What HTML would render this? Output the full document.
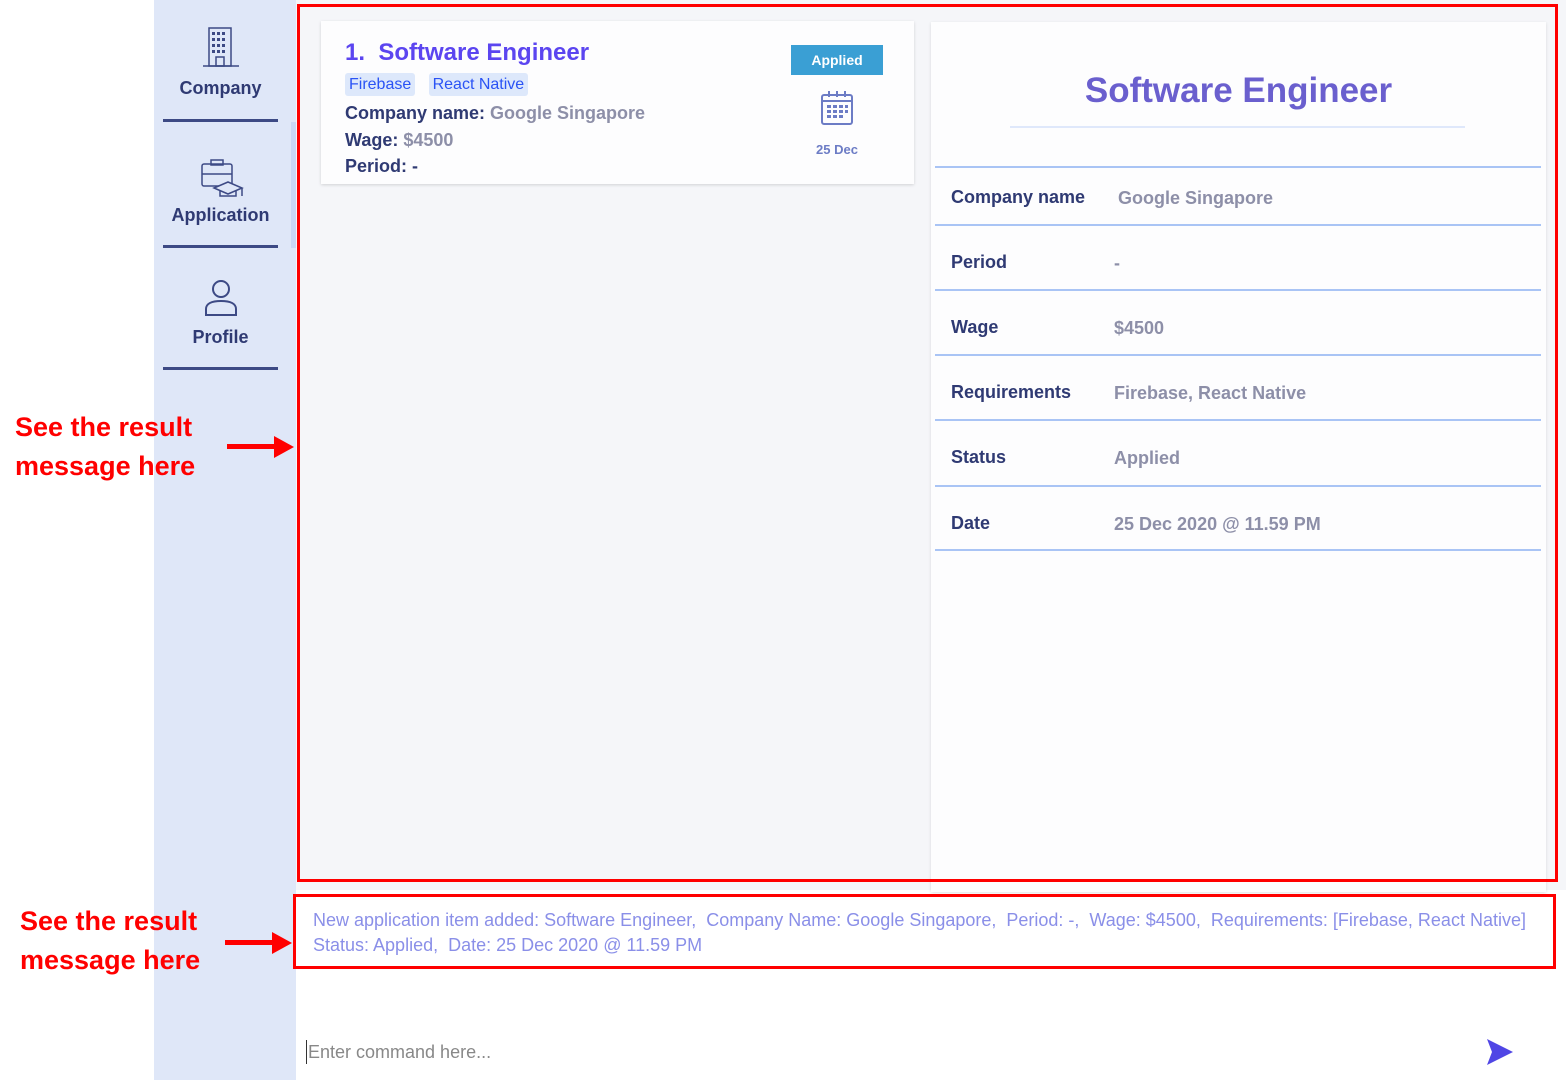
<!DOCTYPE html>
<html><head><meta charset="utf-8"><style>
*{margin:0;padding:0;box-sizing:border-box}
body{width:1566px;height:1080px;position:relative;background:#fff;font-family:"Liberation Sans",sans-serif;overflow:hidden}
.abs{position:absolute}
.side{left:154px;top:0;width:142px;height:1080px;background:#dfe7f8}
.nav{left:163px;width:115px;text-align:center;color:#2f3a73;font-weight:bold;font-size:18px}
.navline{left:163px;width:115px;height:3px;background:#3d4a85}
.main{left:296px;top:0;width:1270px;height:890px;background:#f5f6f9}
.card{left:321px;top:21px;width:593px;height:163px;background:#fdfdfe;box-shadow:0 1px 3px rgba(0,0,0,.15)}
.detail{left:931px;top:22px;width:615px;height:870px;background:#fdfdfe;box-shadow:0 1px 3px rgba(0,0,0,.12)}
.tag{background:#dde8fb;color:#2a53f5;font-size:16px;padding:3px 4px;border-radius:3px}
.lbl{color:#2f3a73;font-weight:bold;font-size:18px}
.val{color:#8d8fa8;font-size:18px;font-weight:bold}
.dl{left:935px;width:606px;height:2px;background:#a9c4f5}
.red{border:3px solid #f00}
.ann{color:#f00;font-weight:bold;font-size:27px;line-height:39px}
</style></head><body>
<div class="abs side"></div>
<div class="abs" style="left:291px;top:122px;width:5px;height:126px;background:#c9d7f5"></div>
<svg class="abs" style="left:203px;top:26px" width="36" height="42" viewBox="0 0 36 42" fill="none" stroke="#3d4a85" stroke-width="1.5"><rect x="6" y="2" width="22" height="38"/><line x1="0" y1="40" x2="36" y2="40"/><g fill="#3d4a85" stroke="none"><rect x="9" y="6" width="3" height="3"/><rect x="14" y="6" width="3" height="3"/><rect x="19" y="6" width="3" height="3"/><rect x="9" y="12" width="3" height="3"/><rect x="14" y="12" width="3" height="3"/><rect x="19" y="12" width="3" height="3"/><rect x="9" y="18" width="3" height="3"/><rect x="14" y="18" width="3" height="3"/><rect x="19" y="18" width="3" height="3"/><rect x="9" y="24" width="3" height="3"/><rect x="14" y="24" width="3" height="3"/><rect x="19" y="24" width="3" height="3"/></g><rect x="13" y="31" width="8" height="9"/></svg>
<div class="abs nav" style="top:78px">Company</div>
<div class="abs navline" style="top:119px"></div>
<svg class="abs" style="left:200px;top:158px" width="44" height="44" viewBox="0 0 44 44" fill="none" stroke="#3d4a85" stroke-width="1.5"><rect x="2" y="6" width="30" height="22" rx="2"/><rect x="11" y="2" width="12" height="5"/><line x1="2" y1="16" x2="32" y2="16"/><path d="M14 30l14-6 14 6-14 6z" fill="#dfe7f8"/><path d="M20 33v5h16v-5"/><line x1="42" y1="30" x2="42" y2="38"/></svg>
<div class="abs nav" style="top:205px">Application</div>
<div class="abs navline" style="top:245px"></div>
<svg class="abs" style="left:204px;top:279px" width="34" height="38" viewBox="0 0 34 38" fill="none" stroke="#3d4a85" stroke-width="2"><circle cx="17" cy="10" r="8"/><path d="M2 36v-6c0-5 5-8 15-8s15 3 15 8v6z"/></svg>
<div class="abs nav" style="top:327px">Profile</div>
<div class="abs navline" style="top:367px"></div>

<div class="abs main"></div>
<div class="abs card">
  <div class="abs" style="left:24px;top:18px;color:#5b45f0;font-weight:bold;font-size:24px">1.&nbsp; Software Engineer</div>
  <div class="abs" style="left:24px;top:55px"><span class="tag">Firebase</span>&nbsp;&nbsp;&nbsp;<span class="tag">React Native</span></div>
  <div class="abs" style="left:24px;top:80px;line-height:24.5px"><span class="lbl">Company name: </span><span class="val">Google Singapore</span><br><span class="lbl">Wage: </span><span class="val">$4500</span><br><span class="lbl">Period: -</span></div>
  <div class="abs" style="left:470px;top:24px;width:92px;height:30px;background:#3a9fd4;color:#fff;font-weight:bold;font-size:14px;text-align:center;line-height:30px">Applied</div>
  <svg class="abs" style="left:499px;top:69px" width="34" height="36" viewBox="0 0 34 36" fill="none" stroke="#6c7cc5" stroke-width="2"><rect x="2" y="5" width="30" height="29" rx="2"/><line x1="2" y1="11" x2="32" y2="11"/><g fill="#6c7cc5" stroke="none"><rect x="7" y="15" width="4" height="3"/><rect x="13" y="15" width="4" height="3"/><rect x="19" y="15" width="4" height="3"/><rect x="25" y="15" width="3" height="3"/><rect x="7" y="20" width="4" height="3"/><rect x="13" y="20" width="4" height="3"/><rect x="19" y="20" width="4" height="3"/><rect x="25" y="20" width="3" height="3"/><rect x="7" y="25" width="4" height="3"/><rect x="13" y="25" width="4" height="3"/><rect x="19" y="25" width="4" height="3"/></g><line x1="9" y1="1" x2="9" y2="7"/><line x1="17" y1="1" x2="17" y2="7"/><line x1="25" y1="1" x2="25" y2="7"/></svg>
  <div class="abs" style="left:470px;top:121px;width:92px;text-align:center;color:#6c7cc5;font-size:13px;font-weight:bold">25 Dec</div>
</div>

<div class="abs detail"></div>
<div class="abs" style="left:931px;top:71px;width:615px;text-align:center;color:#6a5fce;font-weight:bold;font-size:35px">Software Engineer</div>
<div class="abs" style="left:1010px;top:126px;width:455px;height:2px;background:#dfe8fb"></div>
<div class="abs dl" style="top:166px"></div>
<div class="abs dl" style="top:224px"></div>
<div class="abs dl" style="top:289px"></div>
<div class="abs dl" style="top:354px"></div>
<div class="abs dl" style="top:419px"></div>
<div class="abs dl" style="top:485px"></div>
<div class="abs dl" style="top:549px"></div>
<div class="abs lbl" style="left:951px;top:187px">Company name</div><div class="abs val" style="left:1118px;top:188px">Google Singapore</div>
<div class="abs lbl" style="left:951px;top:252px">Period</div><div class="abs val" style="left:1114px;top:253px">-</div>
<div class="abs lbl" style="left:951px;top:317px">Wage</div><div class="abs val" style="left:1114px;top:318px">$4500</div>
<div class="abs lbl" style="left:951px;top:382px">Requirements</div><div class="abs val" style="left:1114px;top:383px">Firebase, React Native</div>
<div class="abs lbl" style="left:951px;top:447px">Status</div><div class="abs val" style="left:1114px;top:448px">Applied</div>
<div class="abs lbl" style="left:951px;top:513px">Date</div><div class="abs val" style="left:1114px;top:514px">25 Dec 2020 @ 11.59 PM</div>

<div class="abs red" style="left:297px;top:4px;width:1261px;height:878px"></div>
<div class="abs red" style="left:293px;top:894px;width:1263px;height:75px"></div>
<div class="abs" style="left:313px;top:908px;color:#8a8fe8;font-size:18px;line-height:25px;white-space:nowrap">New application item added: Software Engineer,&nbsp; Company Name: Google Singapore,&nbsp; Period: -,&nbsp; Wage: $4500,&nbsp; Requirements: [Firebase, React Native]<br>Status: Applied,&nbsp; Date: 25 Dec 2020 @ 11.59 PM</div>

<div class="abs" style="left:306px;top:1040px;width:1px;height:24px;background:#333"></div>
<div class="abs" style="left:308px;top:1042px;color:#888;font-size:18px">Enter command here...</div>
<svg class="abs" style="left:1486px;top:1038px" width="28" height="28" viewBox="0 0 28 28"><path d="M1 1L27 14 1 27 6 14z" fill="#5046e5"/></svg>

<div class="abs ann" style="left:15px;top:408px">See the result<br>message here</div>
<div class="abs" style="left:227px;top:444px;width:52px;height:5px;background:#f00"></div>
<svg class="abs" style="left:274px;top:436px" width="20" height="22"><path d="M0 0L20 11 0 22z" fill="#f00"/></svg>
<div class="abs ann" style="left:20px;top:902px">See the result<br>message here</div>
<div class="abs" style="left:225px;top:940px;width:52px;height:5px;background:#f00"></div>
<svg class="abs" style="left:272px;top:932px" width="20" height="22"><path d="M0 0L20 11 0 22z" fill="#f00"/></svg>
</body></html>
